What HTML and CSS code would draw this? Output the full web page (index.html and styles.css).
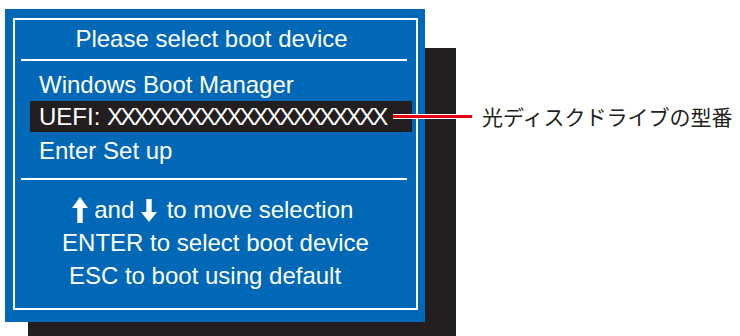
FILE: index.html
```html
<!DOCTYPE html>
<html lang="ja">
<head>
<meta charset="utf-8">
<title>Boot device</title>
<link rel="stylesheet" href="styles.css">
</head>
<body>
<div class="stage">
  <div class="panel">
    <div class="frame">
      <div class="title">Please select boot device</div>
      <div class="rule"></div>
      <ul class="menu">
        <li class="item">Windows Boot Manager</li>
        <li class="item selected">UEFI: <span class="model">XXXXXXXXXXXXXXXXXXXXX</span></li>
        <li class="item">Enter Set up</li>
      </ul>
      <div class="rule rule-lower"></div>
      <div class="help">
        <p class="help-line shift-arrows"><svg class="arrow arrow-up" viewBox="0 0 16 26" width="16" height="26" aria-hidden="true"><polygon points="8,0 16,11 10.7,11 10.7,26 5.3,26 5.3,11 0,11" fill="#fff"/></svg> and <svg class="arrow arrow-down" viewBox="0 0 16 23" width="16" height="23" aria-hidden="true"><polygon points="5.3,0 10.7,0 10.7,13 16,13 8,23 0,13 5.3,13" fill="#fff"/></svg> to move selection</p>
        <p class="help-line">ENTER to select boot device</p>
        <p class="help-line shift-esc">ESC to boot using default</p>
      </div>
    </div>
  </div>
  <div class="callout">光ディスクドライブの型番</div>
  <div class="leader"></div>
</div>
</body>
</html>
```

FILE: styles.css
```css
html, body {
  margin: 0;
  padding: 0;
  background: #ffffff;
  overflow: hidden;
}

.stage {
  position: relative;
  display: flex;
  align-items: flex-start;
  padding: 9px 0 0 5px;
  width: 740px;
  height: 336px;
  box-sizing: border-box;
  font-family: "Liberation Sans", Arial, sans-serif;
}

.panel {
  width: 420px;
  height: 313px;
  box-sizing: border-box;
  padding: 9px 7px 12px 8px;
  background: #0068b6;
  box-shadow: 27px 43px 0 4px #231f20;
  position: relative;
  z-index: 1;
}

.frame {
  height: 100%;
  box-sizing: border-box;
  border: 2px solid #ffffff;
  color: #ffffff;
  font-size: 24px;
  line-height: 33px;
}

.title {
  margin-top: 2px;
  padding-right: 8px;
  text-align: center;
}

.rule {
  height: 2px;
  background: #ffffff;
  margin: 4px 9px 0 6px;
}

.rule-lower {
  margin-top: 11px;
}

.menu {
  list-style: none;
  margin: 7px 0 0 0;
  padding: 0;
}

.item {
  padding-left: 24px;
  height: 33px;
  white-space: nowrap;
}

.item.selected {
  background: #231f20;
  margin: 0 4px 2px 15px;
  padding-left: 9px;
  height: 31px;
  line-height: 31px;
}

.model {
  letter-spacing: -2.75px;
}

.help {
  margin-top: 13px;
}

.help-line {
  margin: 0;
  text-align: center;
  white-space: nowrap;
}

.shift-arrows {
  padding-right: 6px;
}

.shift-esc {
  padding-right: 21px;
}

.arrow {
  display: inline-block;
}

.arrow-up {
  vertical-align: -5px;
}

.arrow-down {
  vertical-align: -4px;
  margin-right: 3px;
}

.callout {
  margin: 92px 0 0 57px;
  font-family: "Noto Sans CJK JP", "Noto Sans", sans-serif;
  font-size: 21px;
  line-height: 30px;
  color: #231f20;
  white-space: nowrap;
}

.leader {
  position: absolute;
  left: 393px;
  top: 114px;
  width: 79px;
  height: 3px;
  background: #e60012;
  border-top: 1px solid #ffffff;
  border-bottom: 1px solid #ffffff;
  z-index: 2;
}
```
